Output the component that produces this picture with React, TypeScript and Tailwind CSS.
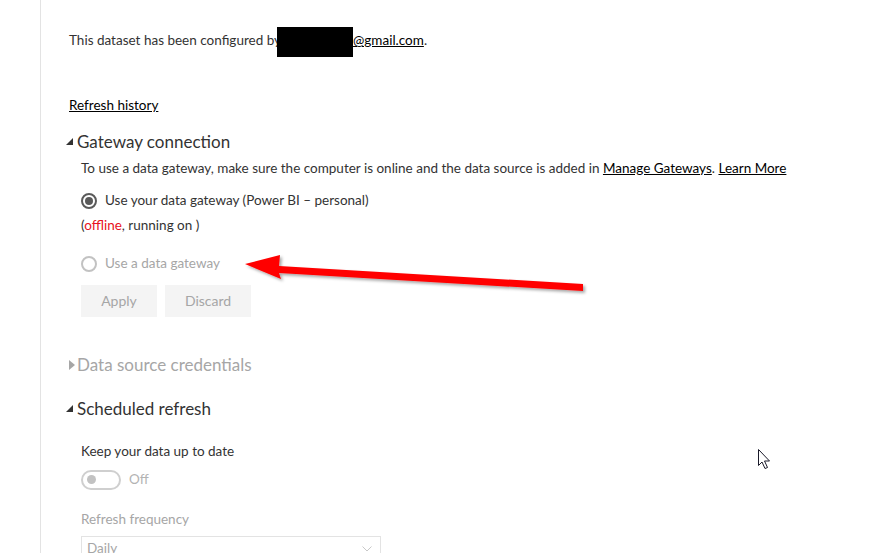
import React from "react";

const ExpandedIcon = () => (
  <svg width="7" height="7" viewBox="0 0 7 7" className="mr-[4px]">
    <polygon points="7,0 7,7 0,7" fill="#333" />
  </svg>
);

const CollapsedIcon = () => (
  <svg width="6" height="10" viewBox="0 0 6 10" className="mr-[2px] ml-[3px]">
    <polygon points="0,0 6,5 0,10" fill="#a6a6a6" />
  </svg>
);

const Radio = ({ checked, label }: { checked?: boolean; label: string }) => (
  <div className="flex items-center h-[20px]">
    <span
      className={
        checked
          ? "flex items-center justify-center w-[16px] h-[16px] rounded-full border-2 border-[#5a5a5a]"
          : "flex items-center justify-center w-[16px] h-[16px] rounded-full border-2 border-[#c2c2c2]"
      }
    >
      {checked && <span className="w-[8px] h-[8px] rounded-full bg-[#5a5a5a]" />}
    </span>
    <span className={checked ? "ml-[8px] text-[#333]" : "ml-[8px] text-[#a6a6a6]"}>{label}</span>
  </div>
);

const Annotations = () => (
  <svg className="absolute left-0 top-0 pointer-events-none" width="870" height="553">
    <defs>
      <filter id="sh" x="-10%" y="-50%" width="120%" height="200%">
        <feDropShadow dx="2" dy="2" stdDeviation="1.5" floodColor="#000" floodOpacity="0.35" />
      </filter>
    </defs>
    <polygon
      points="245,264 280,255 279,266 583,284 583,291 279,273 281,279"
      fill="#ff0000"
      filter="url(#sh)"
    />
    <path
      d="M758.5 449.5 L758.5 465.5 L762 462 L765 468.5 L767.5 467.5 L764.5 461 L769.5 461 Z"
      fill="#fff"
      stroke="#1a1a2a"
      strokeWidth="1"
    />
  </svg>
);

export default function App() {
  return (
    <div className="relative w-[870px] h-[553px] overflow-hidden bg-white font-['Lato',sans-serif] text-[13.5px] text-[#333]">
      <div className="ml-[40px] h-full border-l border-[#e3e3e3] pl-[28px]">
        <div className="pt-[30px] leading-[20px]">
          This dataset has been configured by
          <span className="inline-block align-middle w-[76px] h-[30px] -my-[5px] -ml-[4px] bg-black" />
          <span className="underline text-black">@gmail.com</span>.
        </div>

        <div className="mt-[43px] leading-[20px]">
          <span className="underline text-black">Refresh history</span>
        </div>

        <div className="mt-[15px] -ml-[3px] flex items-center h-[24px] text-[17px]">
          <ExpandedIcon />
          <span>Gateway connection</span>
        </div>

        <div className="pl-[12px]">
          <div className="mt-[4px] leading-[20px]">
            To use a data gateway, make sure the computer is online and the data source is added in{" "}
            <span className="underline text-black">Manage Gateways</span>.{" "}
            <span className="underline text-black">Learn More</span>
          </div>

          <div className="mt-[13px]">
            <Radio checked label="Use your data gateway (Power BI – personal)" />
          </div>

          <div className="mt-[4px] leading-[20px]">
            (<span className="text-[#e81123]">offline</span>, running on )
          </div>

          <div className="mt-[19px]">
            <Radio label="Use a data gateway" />
          </div>

          <div className="mt-[11px] flex gap-[8px]">
            <button className="w-[76px] h-[32px] bg-[#f4f4f4] text-[14px] text-[#a6a6a6]">Apply</button>
            <button className="w-[86px] h-[32px] bg-[#f4f4f4] text-[14px] text-[#a6a6a6]">Discard</button>
          </div>
        </div>

        <div className="mt-[36px] -ml-[3px] flex items-center h-[24px] text-[17px] text-[#a6a6a6]">
          <CollapsedIcon />
          <span>Data source credentials</span>
        </div>

        <div className="mt-[20px] -ml-[3px] flex items-center h-[24px] text-[17px]">
          <ExpandedIcon />
          <span>Scheduled refresh</span>
        </div>

        <div className="pl-[12px]">
          <div className="mt-[20px] leading-[20px]">Keep your data up to date</div>

          <div className="mt-[9px] flex items-center h-[20px]">
            <span className="flex items-center w-[40px] h-[20px] rounded-full border-2 border-[#cfcfcf] pl-[4px]">
              <span className="w-[9px] h-[9px] rounded-full bg-[#c2c2c2]" />
            </span>
            <span className="ml-[8px] text-[#b3b3b3]">Off</span>
          </div>

          <div className="mt-[19px] leading-[20px] text-[#a6a6a6]">Refresh frequency</div>

          <div className="mt-[7px] flex items-start justify-between w-[300px] h-[32px] border border-[#e3e3e3] px-[5px] pt-[1px] leading-[20px] text-[#a6a6a6]">
            <span>Daily</span>
            <svg width="10" height="6" viewBox="0 0 10 6" className="mr-[3px] mt-[8px]">
              <polyline points="0.5,0.5 5,5 9.5,0.5" fill="none" stroke="#c8c8c8" strokeWidth="1" />
            </svg>
          </div>
        </div>
      </div>
      <Annotations />
    </div>
  );
}
